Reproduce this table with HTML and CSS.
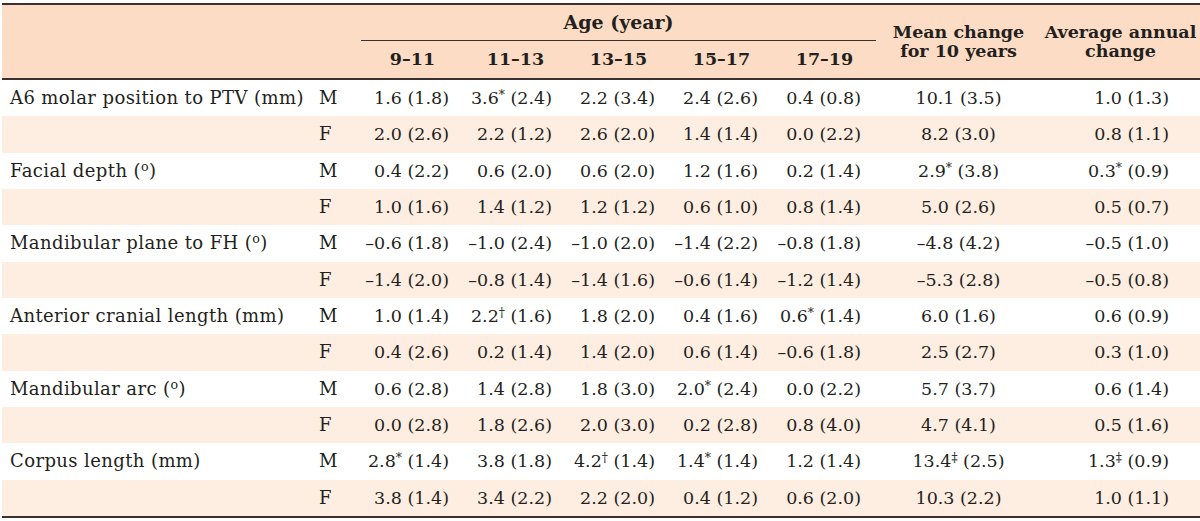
FILE: index.html
```html
<!DOCTYPE html>
<html lang="en">
<head>
<meta charset="utf-8">
<title>Changes with age</title>
<link rel="stylesheet" href="styles.css">
</head>
<body>
<table class="data">
  <colgroup>
    <col class="c-label">
    <col class="c-sex">
    <col class="c-age"><col class="c-age"><col class="c-age"><col class="c-age"><col class="c-age">
    <col class="c-mean">
    <col class="c-avg">
  </colgroup>
  <thead>
    <tr class="h1">
      <th class="blank" rowspan="2"></th>
      <th class="blank" rowspan="2"></th>
      <th class="age" colspan="5">Age (year)</th>
      <th class="sum" rowspan="2">Mean change<br>for 10 years</th>
      <th class="sum" rowspan="2">Average annual<br>change</th>
    </tr>
    <tr class="h2">
      <th>9–11</th><th>11–13</th><th>13–15</th><th>15–17</th><th>17–19</th>
    </tr>
  </thead>
  <tbody>
    <tr class="m">
      <td class="lbl">A6 molar position to PTV (mm)</td><td class="sex">M</td>
      <td>1.6 (1.8)</td><td>3.6<sup>*</sup> (2.4)</td><td>2.2 (3.4)</td><td>2.4 (2.6)</td><td>0.4 (0.8)</td>
      <td class="mean">10.1 (3.5)</td><td class="avg">1.0 (1.3)</td>
    </tr>
    <tr class="f">
      <td class="lbl"></td><td class="sex">F</td>
      <td>2.0 (2.6)</td><td>2.2 (1.2)</td><td>2.6 (2.0)</td><td>1.4 (1.4)</td><td>0.0 (2.2)</td>
      <td class="mean">8.2 (3.0)</td><td class="avg">0.8 (1.1)</td>
    </tr>
    <tr class="m">
      <td class="lbl">Facial depth (<sup>o</sup>)</td><td class="sex">M</td>
      <td>0.4 (2.2)</td><td>0.6 (2.0)</td><td>0.6 (2.0)</td><td>1.2 (1.6)</td><td>0.2 (1.4)</td>
      <td class="mean">2.9<sup>*</sup> (3.8)</td><td class="avg">0.3<sup>*</sup> (0.9)</td>
    </tr>
    <tr class="f">
      <td class="lbl"></td><td class="sex">F</td>
      <td>1.0 (1.6)</td><td>1.4 (1.2)</td><td>1.2 (1.2)</td><td>0.6 (1.0)</td><td>0.8 (1.4)</td>
      <td class="mean">5.0 (2.6)</td><td class="avg">0.5 (0.7)</td>
    </tr>
    <tr class="m">
      <td class="lbl">Mandibular plane to FH (<sup>o</sup>)</td><td class="sex">M</td>
      <td>–0.6 (1.8)</td><td>–1.0 (2.4)</td><td>–1.0 (2.0)</td><td>–1.4 (2.2)</td><td>–0.8 (1.8)</td>
      <td class="mean">–4.8 (4.2)</td><td class="avg">–0.5 (1.0)</td>
    </tr>
    <tr class="f">
      <td class="lbl"></td><td class="sex">F</td>
      <td>–1.4 (2.0)</td><td>–0.8 (1.4)</td><td>–1.4 (1.6)</td><td>–0.6 (1.4)</td><td>–1.2 (1.4)</td>
      <td class="mean">–5.3 (2.8)</td><td class="avg">–0.5 (0.8)</td>
    </tr>
    <tr class="m">
      <td class="lbl">Anterior cranial length (mm)</td><td class="sex">M</td>
      <td>1.0 (1.4)</td><td>2.2<sup>†</sup> (1.6)</td><td>1.8 (2.0)</td><td>0.4 (1.6)</td><td>0.6<sup>*</sup> (1.4)</td>
      <td class="mean">6.0 (1.6)</td><td class="avg">0.6 (0.9)</td>
    </tr>
    <tr class="f">
      <td class="lbl"></td><td class="sex">F</td>
      <td>0.4 (2.6)</td><td>0.2 (1.4)</td><td>1.4 (2.0)</td><td>0.6 (1.4)</td><td>–0.6 (1.8)</td>
      <td class="mean">2.5 (2.7)</td><td class="avg">0.3 (1.0)</td>
    </tr>
    <tr class="m">
      <td class="lbl">Mandibular arc (<sup>o</sup>)</td><td class="sex">M</td>
      <td>0.6 (2.8)</td><td>1.4 (2.8)</td><td>1.8 (3.0)</td><td>2.0<sup>*</sup> (2.4)</td><td>0.0 (2.2)</td>
      <td class="mean">5.7 (3.7)</td><td class="avg">0.6 (1.4)</td>
    </tr>
    <tr class="f">
      <td class="lbl"></td><td class="sex">F</td>
      <td>0.0 (2.8)</td><td>1.8 (2.6)</td><td>2.0 (3.0)</td><td>0.2 (2.8)</td><td>0.8 (4.0)</td>
      <td class="mean">4.7 (4.1)</td><td class="avg">0.5 (1.6)</td>
    </tr>
    <tr class="m">
      <td class="lbl">Corpus length (mm)</td><td class="sex">M</td>
      <td>2.8<sup>*</sup> (1.4)</td><td>3.8 (1.8)</td><td>4.2<sup>†</sup> (1.4)</td><td>1.4<sup>*</sup> (1.4)</td><td>1.2 (1.4)</td>
      <td class="mean">13.4<sup>‡</sup> (2.5)</td><td class="avg">1.3<sup>‡</sup> (0.9)</td>
    </tr>
    <tr class="f last">
      <td class="lbl"></td><td class="sex">F</td>
      <td>3.8 (1.4)</td><td>3.4 (2.2)</td><td>2.2 (2.0)</td><td>0.4 (1.2)</td><td>0.6 (2.0)</td>
      <td class="mean">10.3 (2.2)</td><td class="avg">1.0 (1.1)</td>
    </tr>
  </tbody>
</table>
</body>
</html>
```

FILE: styles.css
```css
html, body {
  margin: 0;
  padding: 0;
  background: #ffffff;
}

body {
  padding: 3px 0 0 2px;
  font-family: "DejaVu Serif", "Liberation Serif", serif;
  font-size: 17px;
  color: #231f20;
}

.data {
  border-collapse: separate;
  border-spacing: 0;
  table-layout: fixed;
  width: 1198px;
}

.c-label { width: 308px; }
.c-sex { width: 51px; }
.c-age { width: 103px; }
.c-mean { width: 165px; }
.c-avg { width: 159px; }

.data th {
  background: #fcdcc4;
  font-weight: bold;
  text-align: center;
  padding: 0;
  line-height: 19px;
  white-space: nowrap;
  font-size: 17.5px;
}

.h1 th {
  border-top: 2px solid #3a3130;
  height: 35px;
}

.h1 th.blank,
.h1 th.sum {
  border-bottom: 2px solid #3a3130;
}

.h1 th.age {
  border-bottom: 1px solid #3a3130;
  vertical-align: middle;
  font-size: 19px;
}

.h2 th {
  height: 37px;
  border-bottom: 2px solid #3a3130;
}

.data td {
  height: 36.33px;
  padding: 0 15px 0 0;
  text-align: right;
  white-space: nowrap;
  line-height: 20px;
  font-size: 17.5px;
}

.data tr.f td {
  background: #feede1;
}

.data td.lbl {
  text-align: left;
  padding: 0 0 0 8px;
  font-size: 18px;
  letter-spacing: 0.4px;
}

.data td.sex {
  text-align: left;
  padding: 0 0 0 9px;
  font-size: 18px;
}

.data td.mean {
  text-align: center;
  padding: 0;
}

.data td.avg {
  padding-right: 31px;
}

.data tr.last td {
  border-bottom: 2px solid #3a3130;
}

sup {
  font-size: 0.7em;
  line-height: 0;
  vertical-align: 0.45em;
}
```
